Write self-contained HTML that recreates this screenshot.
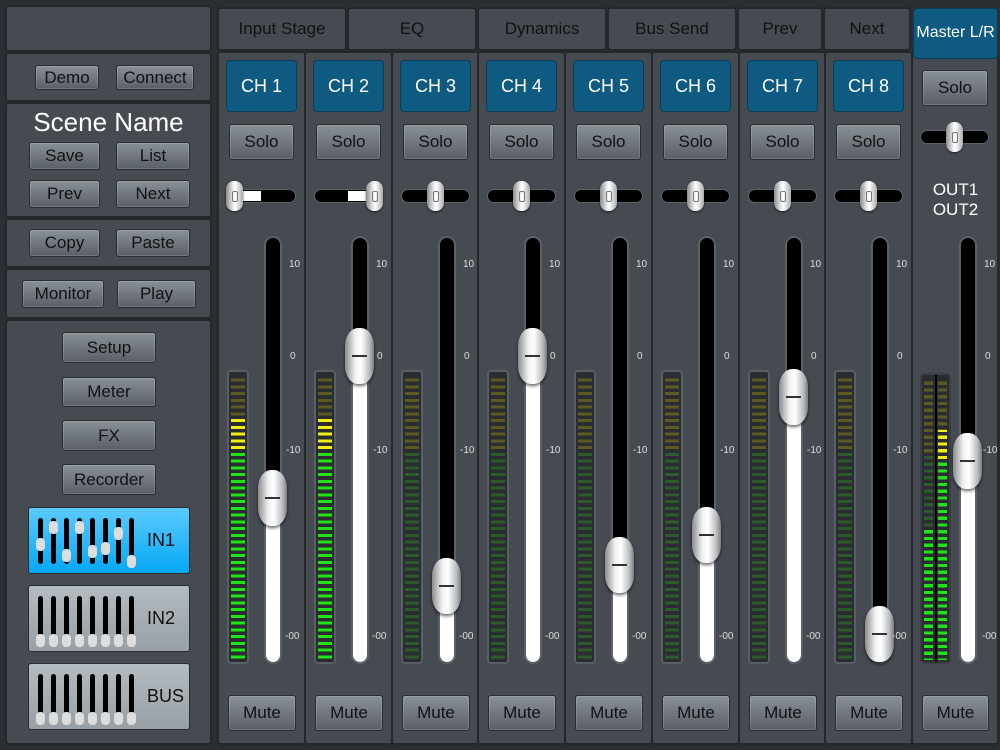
<!DOCTYPE html>
<html><head><meta charset="utf-8">
<style>
*{box-sizing:border-box;margin:0;padding:0}
body{width:1000px;height:750px;background:#2b2e32;font-family:"Liberation Sans",sans-serif;position:relative;overflow:hidden}
.p{position:absolute;background:#464b51;border:2px solid #25282b;border-radius:4px}
.b{position:absolute;background:linear-gradient(#8a9098,#5a5f66);border:1px solid #2a2d30;border-radius:3px;color:#111;font-size:17px;text-align:center;box-shadow:inset 0 0 0 1px rgba(255,255,255,.15)}
.tab{position:absolute;top:7px;height:44px;background:#464b51;border:2px solid #25282b;border-radius:4px;color:#111;font-size:17px;text-align:center;line-height:40px}
.blue{position:absolute;background:#0e5a80;border:1px solid #093e5a;border-radius:4px;color:#fff;font-size:18px;text-align:center}
.trk{position:absolute;background:#000;border:2px solid #5c6168;border-radius:9px;overflow:hidden}
.knob{position:absolute;width:29px;height:56px;border-radius:13px/18px;background:linear-gradient(90deg,#8a8c90,#f0f0f0 35%,#fff 55%,#b8babd 85%,#7a7c80);box-shadow:0 2px 3px rgba(0,0,0,.6)}
.knob:after{content:"";position:absolute;left:7px;right:7px;top:27px;height:2px;background:#333}
.pk{position:absolute;width:17px;height:30px;border-radius:8px;background:linear-gradient(90deg,#8a8c90,#f4f4f4 45%,#fff 55%,#a8aaad);box-shadow:0 1px 2px rgba(0,0,0,.6)}
.pk:after{content:"";position:absolute;left:6px;top:10px;width:4px;height:9px;border:1px solid #777;border-radius:2px}
.lbl{position:absolute;color:#ddd;font-size:10px}
.mt{position:absolute;border:2px solid #5a5f66;border-radius:4px;background:#2a2d30;overflow:hidden}
.seg{position:absolute;inset:3px 2px 2px 2px}
.scn{position:absolute;border:1px solid #2a2d30;border-radius:3px;font-size:18px;color:#111}
.mini{position:absolute;width:5px;height:46px;background:#000;border-radius:3px}
.mk{position:absolute;left:-2px;width:9px;height:13px;background:#ddd;border-radius:4px}
</style></head><body>
<div class="p" style="left:5px;top:5px;width:207px;height:47px"></div>
<div class="p" style="left:5px;top:52px;width:207px;height:50px"></div>
<div class="b" style="left:35px;top:65px;width:64px;height:25px;line-height:23px">Demo</div>
<div class="b" style="left:116px;top:65px;width:78px;height:25px;line-height:23px">Connect</div>
<div class="p" style="left:5px;top:102px;width:207px;height:116px"></div>
<div style="position:absolute;left:5px;width:207px;top:107px;text-align:center;color:#fff;font-size:26px">Scene Name</div>
<div class="b" style="left:29px;top:142px;width:71px;height:28px;line-height:26px">Save</div>
<div class="b" style="left:116px;top:142px;width:74px;height:28px;line-height:26px">List</div>
<div class="b" style="left:29px;top:180px;width:71px;height:28px;line-height:26px">Prev</div>
<div class="b" style="left:116px;top:180px;width:74px;height:28px;line-height:26px">Next</div>
<div class="p" style="left:5px;top:218px;width:207px;height:50px"></div>
<div class="b" style="left:29px;top:229px;width:71px;height:28px;line-height:26px">Copy</div>
<div class="b" style="left:116px;top:229px;width:74px;height:28px;line-height:26px">Paste</div>
<div class="p" style="left:5px;top:268px;width:207px;height:51px"></div>
<div class="b" style="left:22px;top:280px;width:82px;height:28px;line-height:26px">Monitor</div>
<div class="b" style="left:117px;top:280px;width:79px;height:28px;line-height:26px">Play</div>
<div class="p" style="left:5px;top:319px;width:207px;height:426px"></div>
<div class="b" style="left:62px;top:332px;width:94px;height:31px;line-height:29px">Setup</div>
<div class="b" style="left:62px;top:377px;width:94px;height:30px;line-height:28px">Meter</div>
<div class="b" style="left:62px;top:420px;width:94px;height:31px;line-height:29px">FX</div>
<div class="b" style="left:62px;top:464px;width:94px;height:31px;line-height:29px">Recorder</div>
<div id="scenes"></div>

<div class="tab" style="left:217px;width:130px">Input Stage</div>
<div class="tab" style="left:347px;width:130px">EQ</div>
<div class="tab" style="left:477px;width:130px">Dynamics</div>
<div class="tab" style="left:607px;width:130px">Bus Send</div>
<div class="tab" style="left:737px;width:86px">Prev</div>
<div class="tab" style="left:823px;width:88px">Next</div>
<div id="strips"></div>
<script>
var s='';
var xs=[217,304,391,477,564,651,738,824];
var ky=[498,356,586,356,565,535,397,634];
var lit=[418,418,null,null,null,null,null,null];
function meter(x,w,level){
  var h='<div class="mt" style="left:'+x+'px;top:370px;width:'+w+'px;height:294px">';
  h+='<div class="seg" style="background:linear-gradient(#5c5a22 0,#5c5a22 77px,#2d5a2a 77px);"></div>';
  if(level!=null){var t=level-373;h+='<div class="seg" style="top:'+t+'px;background:linear-gradient(#f2ef10 0,#f2ef10 '+Math.max(0,80-t)+'px,#22e31a '+Math.max(0,80-t)+'px)"></div>';}
  h+='<div class="seg" style="background:repeating-linear-gradient(#2a2d30 0,#2a2d30 3.7px,transparent 3.7px,transparent 6.75px)"></div></div>';
  return h;
}
for(var i=0;i<8;i++){
  var x=xs[i];
  s+='<div class="p" style="left:'+x+'px;top:51px;width:89px;height:694px"></div>';
  s+='<div class="blue" style="left:'+(x+9)+'px;top:60px;width:71px;height:52px;line-height:50px">CH '+(i+1)+'</div>';
  s+='<div class="b" style="left:'+(x+12)+'px;top:124px;width:65px;height:36px;line-height:34px">Solo</div>';
  var px=x+44,kx=px;
  if(i==0)kx=x+17;if(i==1)kx=x+70;
  s+='<div class="trk" style="left:'+(x+10)+'px;top:189px;width:69px;height:14px;border-radius:7px;border-width:1px"></div>';
  if(i<2){var a=Math.min(px,kx),b=Math.max(px,kx);s+='<div style="position:absolute;left:'+a+'px;top:191px;width:'+(b-a)+'px;height:10px;background:#fff"></div>';}
  s+='<div class="pk" style="left:'+(kx-8)+'px;top:181px"></div>';
  s+=meter(x+10,22,lit[i]);
  s+='<div class="trk" style="left:'+(x+47)+'px;top:236px;width:18px;height:428px"><div style="position:absolute;left:0;right:0;bottom:0;top:'+(ky[i]-238)+'px;background:#fff"></div></div>';
  s+='<div class="knob" style="left:'+(x+41)+'px;top:'+(ky[i]-28)+'px"></div>';
  s+='<div class="lbl" style="left:'+(x+72)+'px;top:259px">10</div><div class="lbl" style="left:'+(x+73)+'px;top:351px">0</div><div class="lbl" style="left:'+(x+69)+'px;top:445px">-10</div><div class="lbl" style="left:'+(x+68)+'px;top:631px">-00</div>';
  s+='<div class="b" style="left:'+(x+11)+'px;top:695px;width:68px;height:36px;line-height:34px">Mute</div>';
}
s+='<div class="p" style="left:911px;top:51px;width:88px;height:694px"></div>';
s+='<div class="blue" style="left:913px;top:8px;width:85px;height:51px;line-height:47px;font-size:16px">Master L/R</div>';
s+='<div class="b" style="left:922px;top:70px;width:66px;height:36px;line-height:34px">Solo</div>';
s+='<div class="trk" style="left:920px;top:130px;width:69px;height:14px;border-radius:7px;border-width:1px"></div><div class="pk" style="left:946px;top:122px"></div>';
s+='<div style="position:absolute;left:913px;width:85px;top:180px;text-align:center;color:#fff;font-size:17px;line-height:20px">OUT1<br>OUT2</div>';
var m='<div class="mt" style="left:920px;top:373px;width:31px;height:291px;border-color:#3a3e43">';
m+='<div class="seg" style="right:16px;background:linear-gradient(#5c5a22 0,#5c5a22 75px,#2d5a2a 75px)"></div>';
m+='<div class="seg" style="right:16px;top:155px;background:#22e31a"></div>';
m+='<div class="seg" style="left:16px;background:linear-gradient(#5c5a22 0,#5c5a22 75px,#2d5a2a 75px)"></div>';
m+='<div class="seg" style="left:16px;top:55px;background:linear-gradient(#f2ef10 0,#f2ef10 32px,#22e31a 32px)"></div>';
m+='<div class="seg" style="background:repeating-linear-gradient(#2a2d30 0,#2a2d30 3.7px,transparent 3.7px,transparent 6.75px)"></div>';
m+='<div style="position:absolute;left:13px;top:0;bottom:0;width:2px;background:#000"></div></div>';
s+=m;
s+='<div class="trk" style="left:959px;top:236px;width:18px;height:428px"><div style="position:absolute;left:0;right:0;bottom:0;top:'+(461-238)+'px;background:#fff"></div></div>';
s+='<div class="knob" style="left:953px;top:433px"></div>';
s+='<div class="lbl" style="left:984px;top:259px">10</div><div class="lbl" style="left:985px;top:351px">0</div><div class="lbl" style="left:983px;top:445px">-10</div><div class="lbl" style="left:982px;top:631px">-00</div>';
s+='<div class="b" style="left:922px;top:695px;width:67px;height:36px;line-height:34px">Mute</div>';
document.getElementById('strips').innerHTML=s;

var sc='';
var defs=[['IN1',507,'linear-gradient(#5ccaff,#04a8f4)',[27,10,38,10,34,31,16,44]],['IN2',585,'linear-gradient(#b4bcc2,#98a0a6)',[45,45,45,45,45,45,45,45]],['BUS',663,'linear-gradient(#b4bcc2,#98a0a6)',[45,45,45,45,45,45,45,45]]];
defs.forEach(function(d){
  sc+='<div class="scn" style="left:28px;top:'+d[1]+'px;width:162px;height:67px;background:'+d[2]+'">';
  for(var j=0;j<8;j++){sc+='<div class="mini" style="left:'+(9+j*13)+'px;top:10px"><div class="mk" style="top:'+(d[3][j]-7)+'px"></div></div>';}
  sc+='<div style="position:absolute;left:118px;top:22px;font-size:18px">'+d[0]+'</div></div>';
});
document.getElementById('scenes').innerHTML=sc;
</script>
</body></html>
